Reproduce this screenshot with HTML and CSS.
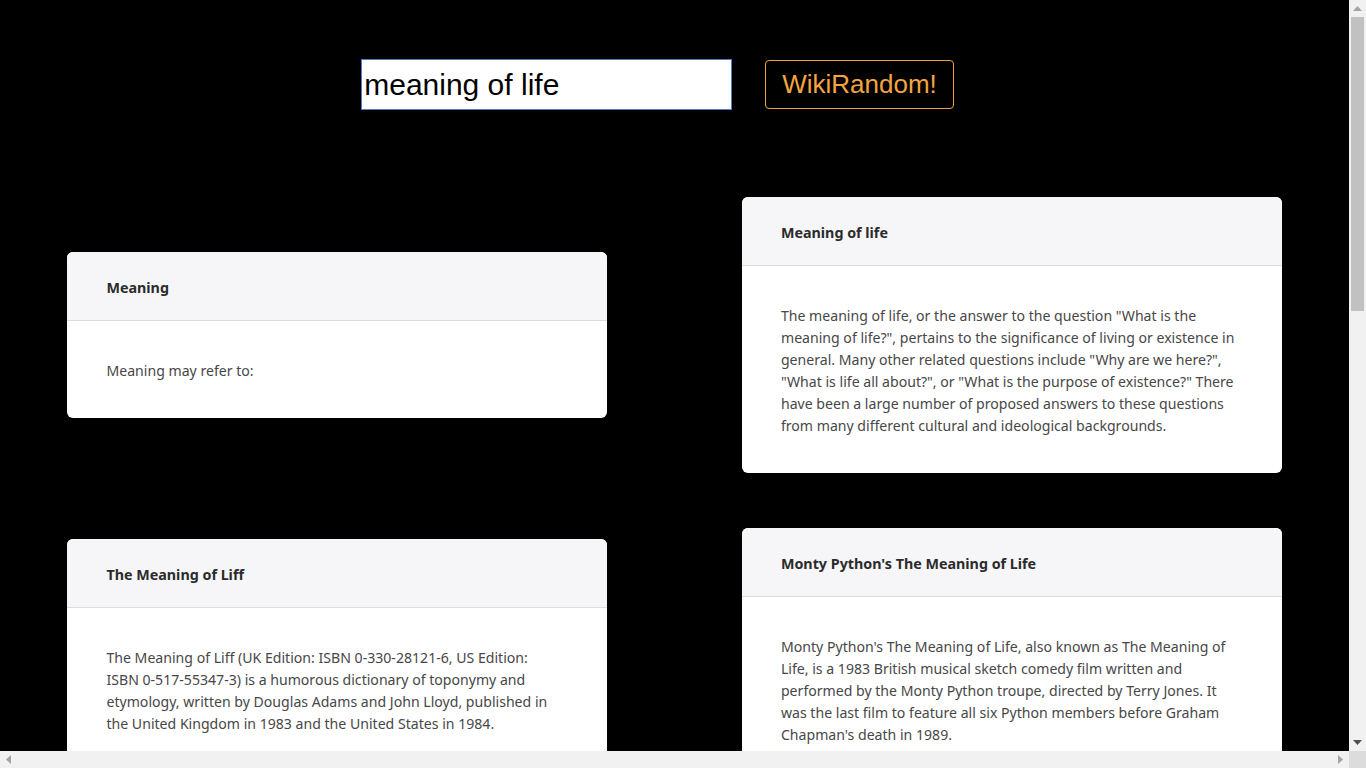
FILE: index.html
```html
<!DOCTYPE html>
<html lang="en">
<head>
<meta charset="utf-8">
<title>WikiRandom</title>
<link rel="stylesheet" href="styles.css">
</head>
<body>
<div class="viewport">
<header class="search-bar">
  <input class="search-input" type="text" value="meaning of life">
  <button class="random-btn" type="button">WikiRandom!</button>
</header>
<main class="results">
  <div class="cell">
    <article class="card">
      <div class="card-header">Meaning</div>
      <div class="card-body">Meaning may refer to:</div>
    </article>
  </div>
  <div class="cell">
    <article class="card">
      <div class="card-header">Meaning of life</div>
      <div class="card-body">The meaning of life, or the answer to the question "What is the meaning of life?", pertains to the significance of living or existence in general. Many other related questions include "Why are we here?", "What is life all about?", or "What is the purpose of existence?" There have been a large number of proposed answers to these questions from many different cultural and ideological backgrounds.</div>
    </article>
  </div>
  <div class="cell">
    <article class="card">
      <div class="card-header">The Meaning of Liff</div>
      <div class="card-body">The Meaning of Liff (UK Edition: ISBN&nbsp;0-330-28121-6, US Edition: ISBN&nbsp;0-517-55347-3) is a humorous dictionary of toponymy and etymology, written by Douglas Adams and John Lloyd, published in the United Kingdom in 1983 and the United States in 1984.</div>
    </article>
  </div>
  <div class="cell">
    <article class="card">
      <div class="card-header">Monty Python's The Meaning of Life</div>
      <div class="card-body">Monty Python's The Meaning of Life, also known as The Meaning of Life, is a 1983 British musical sketch comedy film written and performed by the Monty Python troupe, directed by Terry Jones. It was the last film to feature all six Python members before Graham Chapman's death in 1989.</div>
    </article>
  </div>
  <div class="cell">
    <article class="card">
      <div class="card-header">Meaning of Life (album)</div>
      <div class="card-body">Meaning of Life is the eighth studio album by American singer Kelly Clarkson. It was released on October 27, 2017, through Atlantic Records, making it her first album not to be released under RCA Records, following her departure from the label after the release of her seventh studio album.</div>
    </article>
  </div>
  <div class="cell">
    <article class="card">
      <div class="card-header">The Meaning of Life (Disturbed song)</div>
      <div class="card-body">"The Meaning of Life" is a song by American heavy metal band Disturbed. It was released as the third single from their debut album The Sickness, and later appeared on the soundtrack of the film Little Nicky.</div>
    </article>
  </div>
</main>
</div>
<div class="vscroll" aria-hidden="true">
  <div class="sb-btn">
    <svg width="9" height="5" viewBox="0 0 9 5"><path d="M4.5 0L9 5H0z" fill="#a3a3a3"/></svg>
  </div>
  <div class="sb-track-v"><div class="sb-thumb-v"></div></div>
  <div class="sb-btn">
    <svg width="9" height="5" viewBox="0 0 9 5"><path d="M0 0H9L4.5 5z" fill="#505050"/></svg>
  </div>
</div>
<div class="hscroll" aria-hidden="true">
  <div class="sb-btn">
    <svg width="5" height="9" viewBox="0 0 5 9"><path d="M0 4.5L5 0V9z" fill="#a3a3a3"/></svg>
  </div>
  <div class="sb-track-h"></div>
  <div class="sb-btn">
    <svg width="5" height="9" viewBox="0 0 5 9"><path d="M0 0L5 4.5L0 9z" fill="#a3a3a3"/></svg>
  </div>
</div>
<div class="sb-corner" aria-hidden="true"></div>
</body>
</html>
```
FILE: styles.css
```css
html, body {
  margin: 0;
  padding: 0;
  background: #000;
}

body {
  height: 100vh;
  overflow: hidden;
  display: grid;
  grid-template-columns: 1fr 17px;
  grid-template-rows: 1fr 17px;
  font-family: "Noto Sans", "Open Sans", sans-serif;
}

.viewport {
  min-width: 0;
  min-height: 0;
  overflow: hidden;
  background: #000;
}

/* scrollbars */
.vscroll {
  display: flex;
  flex-direction: column;
  background: #f1f1f1;
  min-height: 0;
}

.hscroll {
  display: flex;
  background: #f1f1f1;
}

.sb-btn {
  flex: 0 0 17px;
  width: 17px;
  height: 17px;
  display: flex;
  align-items: center;
  justify-content: center;
}

.sb-track-v {
  flex: 1;
  padding: 0 2px;
}

.sb-thumb-v {
  height: 294px;
  background: #c1c1c1;
}

.sb-track-h {
  flex: 1;
}

.sb-corner {
  background: #dcdcdc;
}

/* search */
.search-bar {
  display: flex;
  justify-content: center;
  align-items: center;
  gap: 33px;
  padding-top: 59px;
  padding-right: 34px;
}

.search-input {
  box-sizing: border-box;
  width: 371px;
  height: 51px;
  margin: 0;
  padding: 0 2px;
  border: 1px solid #5579c4;
  border-radius: 0;
  background: #fff;
  color: #000;
  font-family: "Liberation Sans", Arial, sans-serif;
  font-size: 30px;
  outline: none;
}

.random-btn {
  box-sizing: border-box;
  height: 49px;
  margin: 0;
  padding: 0 16px;
  border: 1px solid #f2a23c;
  border-radius: 4px;
  background: #000;
  color: #f4a53e;
  font-family: "Liberation Sans", Arial, sans-serif;
  font-size: 26px;
  cursor: pointer;
}

/* results */
.results {
  display: grid;
  grid-template-columns: 1fr 1fr;
  align-items: center;
  row-gap: 55px;
  margin-top: 87px;
  padding-bottom: 115px;
}

.card {
  width: 80%;
  margin: 0 auto;
  background: #fff;
  border-radius: 6px;
  overflow: hidden;
}

.card-header {
  box-sizing: border-box;
  height: 68px;
  display: flex;
  align-items: center;
  padding: 2px 39px 0;
  background: #f6f6f8;
  border-bottom: 1px solid #dcdcdf;
  box-sizing: content-box;
  height: 66px;
  color: #2b2b2b;
  font-weight: 700;
  font-size: 14.3px;
}

.card-body {
  padding: 39px 39px 36px;
  color: #474747;
  font-size: 14.1px;
  line-height: 22px;
}
```
